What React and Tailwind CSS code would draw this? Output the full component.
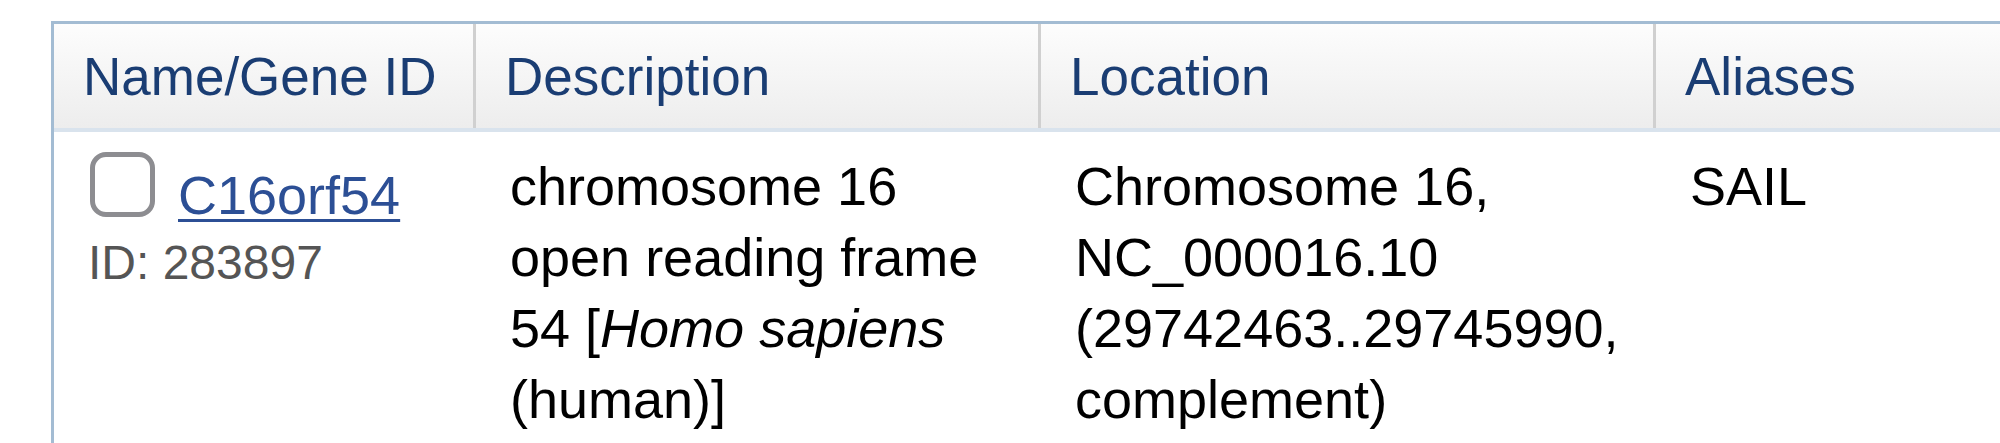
export default function App() {
  const headers = ['Name/Gene ID', 'Description', 'Location', 'Aliases'];

  return (
    <div className="w-[2000px] h-[443px] overflow-hidden bg-white pl-[51px] pt-[21px] font-['Liberation_Sans',Arial,Helvetica,sans-serif]">
      <div className="w-[1949px] border-l-[3px] border-t-[3px] border-[#a3bcd3]">
        {/* header row */}
        <div className="grid grid-cols-[422px_565px_615px_1fr] h-[108px] border-b-[4px] border-[#d9e3ed] bg-linear-to-b from-[#fdfdfd] to-[#ededed]">
          {headers.map((h, i) => (
            <div
              key={h}
              className={`flex items-center pl-[29px] text-[53px] leading-[69px] text-[#1a3d73] ${i < 3 ? 'border-r-[3px] border-[#d0d0d0]' : ''}`}
            >
              {h}
            </div>
          ))}
        </div>

        {/* body row */}
        <div className="grid grid-cols-[422px_565px_615px_1fr] h-[400px] text-[54px] text-black">
          <div className="pl-[34px] pt-[19px]">
            <div className="flex items-start">
              <span className="mt-[1px] ml-[2px] w-[65px] h-[65px] shrink-0 rounded-[16px] border-[5px] border-[#8d8d91] bg-white"></span>
              <a href="#" className="ml-[23px] mt-[9px] leading-[70px] text-[#2c4f95] underline decoration-[3px] underline-offset-[5px]">
                C16orf54
              </a>
            </div>
            <div className="mt-[2px] text-[48px] leading-[62px] text-[#555555]">ID: 283897</div>
          </div>

          <div className="pl-[34px] pt-[19px] leading-[71px] whitespace-nowrap">
            chromosome 16
            <br />
            open reading frame
            <br />
            54 [<i>Homo sapiens</i>
            <br />
            (human)]
          </div>

          <div className="pl-[34px] pt-[19px] leading-[71px] whitespace-nowrap">
            Chromosome 16,
            <br />
            NC_000016.10
            <br />
            (29742463..29745990,
            <br />
            complement)
          </div>

          <div className="pl-[34px] pt-[19px] leading-[71px]">SAIL</div>
        </div>
      </div>
    </div>
  );
}
